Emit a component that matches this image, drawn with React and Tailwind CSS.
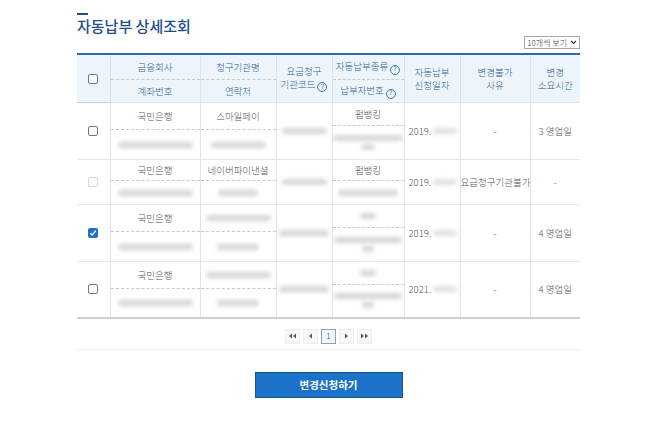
import React from "react";

const font = { fontFamily: '"Noto Sans CJK KR", "Noto Sans", sans-serif' };

function Q() {
  return (
    <span className="ml-[2px] inline-flex h-[10px] w-[10px] items-center justify-center rounded-full border border-[#3b78b8] align-[-1px]">
      <span className="text-[7px] font-normal leading-none text-[#3b78b8]" style={{ fontFamily: '"DejaVu Sans", sans-serif' }}>?</span>
    </span>
  );
}

function Blur({ w, h = 6, c = "#d6d6d6" }) {
  return <div className="rounded-[3px] blur-[2px]" style={{ width: w, height: h, background: c }} />;
}

function Box({ state }) {
  if (state === "checked")
    return (
      <div className="mx-auto flex h-[10px] w-[10px] items-center justify-center rounded-[2px] bg-[#1f6fd1]">
        <svg width="8" height="8" viewBox="0 0 8 8">
          <path d="M1.3 4.2 L3.2 6 L6.8 1.8" stroke="white" strokeWidth="1.4" fill="none" />
        </svg>
      </div>
    );
  return (
    <div
      className={
        state === "disabled"
          ? "mx-auto h-[10px] w-[10px] rounded-[2px] border border-[#d8d8d8] bg-[#fafafa]"
          : "mx-auto h-[10px] w-[10px] rounded-[2px] border border-[#777] bg-white"
      }
    />
  );
}

const vb = "border-l border-[#dde5ec]";

function Split({ top, bottom, h1, h2 }) {
  return (
    <div className="flex h-full flex-col">
      <div className="flex items-center justify-center" style={{ height: h1 }}>
        {top}
      </div>
      <div
        className="flex flex-1 flex-col items-center justify-center gap-[3px] border-t border-dashed border-[#c9c9c9]"
        style={{ minHeight: h2 }}
      >
        {bottom}
      </div>
    </div>
  );
}

function Tri({ dir, double }) {
  const one = (x) =>
    dir === "l" ? `M${x + 3} 0.5 L${x} 3 L${x + 3} 5.5 Z` : `M${x} 0.5 L${x + 3} 3 L${x} 5.5 Z`;
  return (
    <svg width={double ? 8 : 4} height="6" viewBox={`0 0 ${double ? 8 : 4} 6`}>
      <path d={one(0)} fill="#555" />
      {double && <path d={one(4)} fill="#555" />}
    </svg>
  );
}

const rows = [
  { h: 57, box: "normal", c2: "국민은행", c3: <span>스마일페이</span>, c5top: <span>펌뱅킹</span>, c5b: [70, 14], date: "2019.", reason: "-", time: "3 영업일", b2: 75, b3: 55, b4: 45 },
  { h: 45, box: "disabled", c2: "국민은행", c3: <span>네이버파이낸셜</span>, c5top: <span>펌뱅킹</span>, c5b: [60], date: "2019.", reason: "요금청구기관불가", time: "-", b2: 75, b3: 40, b4: 45 },
  { h: 57, box: "checked", c2: "국민은행", c3: <Blur w={65} />, c5top: <Blur w={16} />, c5b: [68, 12], date: "2019.", reason: "-", time: "4 영업일", b2: 75, b3: 42, b4: 50 },
  { h: 56, box: "normal", c2: "국민은행", c3: <Blur w={65} />, c5top: <Blur w={16} />, c5b: [68, 12], date: "2021.", reason: "-", time: "4 영업일", b2: 75, b3: 42, b4: 50 },
];

export default function App() {
  return (
    <div className="min-h-[421px] w-[658px] bg-white font-light" style={font}>
      <div className="ml-[77px] w-[503px] pt-[13px]">
        <div className="h-[2px] w-[11px] bg-[#1d4f8c]" />
        <div className="mt-[1px] text-[15px] font-medium leading-[20px] text-[#1d4f8c]">자동납부 상세조회</div>
        <div className="flex justify-end">
          <div className="flex h-[13px] items-center gap-[3px] border border-[#a8a8a8] px-[2px] text-[8px] leading-none text-[#333]">
            <span>10개씩 보기</span>
            <svg width="7" height="5" viewBox="0 0 7 5">
              <path d="M1 1 L3.5 3.5 L6 1" stroke="#333" strokeWidth="1.2" fill="none" />
            </svg>
          </div>
        </div>
        <table className="mt-[4px] w-[503px] table-fixed border-collapse text-[9.5px] text-[#555]">
          <colgroup>
            <col style={{ width: 33 }} />
            <col style={{ width: 90 }} />
            <col style={{ width: 76 }} />
            <col style={{ width: 56 }} />
            <col style={{ width: 72 }} />
            <col style={{ width: 56 }} />
            <col style={{ width: 70 }} />
            <col style={{ width: 50 }} />
          </colgroup>
          <thead>
            <tr className="h-[48px] border-t-2 border-[#2b6cb0] bg-[#eef5fa] text-[#2a5f98]">
              <td className="border-b border-[#c9d3dc] p-0">
                <Box state="normal" />
              </td>
              <td className={`${vb} border-b border-[#c9d3dc] p-0`}>
                <Split h1={24} h2={23} top={<span>금융회사</span>} bottom={<span>계좌번호</span>} />
              </td>
              <td className={`${vb} border-b border-[#c9d3dc] p-0`}>
                <Split h1={24} h2={23} top={<span>청구기관명</span>} bottom={<span>연락처</span>} />
              </td>
              <td className={`${vb} border-b border-[#c9d3dc] p-0 text-center leading-[13px]`}>
                요금청구
                <br />
                기관코드
                <Q />
              </td>
              <td className={`${vb} border-b border-[#c9d3dc] p-0`}>
                <Split
                  h1={24}
                  h2={23}
                  top={<span>자동납부종류<Q /></span>}
                  bottom={<span>납부자번호<Q /></span>}
                />
              </td>
              <td className={`${vb} border-b border-[#c9d3dc] p-0 text-center leading-[13px]`}>
                자동납부
                <br />
                신청일자
              </td>
              <td className={`${vb} border-b border-[#c9d3dc] p-0 text-center leading-[13px]`}>
                변경불가
                <br />
                사유
              </td>
              <td className={`${vb} border-b border-[#c9d3dc] p-0 text-center leading-[13px]`}>
                변경
                <br />
                소요시간
              </td>
            </tr>
          </thead>
          <tbody>
            {rows.map((r, i) => (
              <tr
                key={i}
                className={i === rows.length - 1 ? "border-b-2 border-[#cfcfcf]" : "border-b border-[#e6e6e6]"}
                style={{ height: r.h }}
              >
                <td className="p-0">
                  <Box state={r.box} />
                </td>
                <td className={`${vb} p-0`} style={{ height: r.h }}>
                  <Split h1={i === 1 ? 20 : 26} h2={20} top={<span>{r.c2}</span>} bottom={<Blur w={r.b2} />} />
                </td>
                <td className={`${vb} p-0`} style={{ height: r.h }}>
                  <Split h1={i === 1 ? 20 : 26} h2={20} top={r.c3} bottom={<Blur w={r.b3} />} />
                </td>
                <td className={`${vb} p-0`}>
                  <div className="flex justify-center">
                    <Blur w={r.b4} />
                  </div>
                </td>
                <td className={`${vb} p-0`} style={{ height: r.h }}>
                  <Split
                    h1={i === 1 ? 20 : 22}
                    h2={20}
                    top={r.c5top}
                    bottom={r.c5b.map((w, k) => (
                      <Blur key={k} w={w} />
                    ))}
                  />
                </td>
                <td className={`${vb} p-0 pl-[4px]`}>
                  <div className="flex items-center gap-[2px]">
                    <span>{r.date}</span>
                    <Blur w={24} c="#e0e0e0" />
                  </div>
                </td>
                <td className={`${vb} whitespace-nowrap p-0 text-center`}>{r.reason}</td>
                <td className={`${vb} p-0 text-center`}>{r.time}</td>
              </tr>
            ))}
          </tbody>
        </table>
        <div className="flex h-[31px] items-center justify-center gap-[3px] border-b border-[#efefef] pt-[9px] pb-[4px]">
          {[
            <Tri dir="l" double />,
            <Tri dir="l" />,
            "1",
            <Tri dir="r" />,
            <Tri dir="r" double />,
          ].map((t, i) => (
            <div
              key={i}
              className={
                i === 2
                  ? "flex h-[15px] w-[15px] items-center justify-center border border-[#8aa4bd] bg-[#f3f7fb] text-[8px] text-[#345]"
                  : "flex h-[15px] w-[15px] items-center justify-center border border-[#eeeeee] bg-[#f7f7f7]"
              }
            >
              {t}
            </div>
          ))}
        </div>
        <div className="mt-[22px] flex justify-center">
          <div className="flex h-[26px] w-[148px] items-center justify-center border border-[#1d4f8c] bg-[#1a73c9] text-[10.5px] font-bold text-white">
            변경신청하기
          </div>
        </div>
      </div>
    </div>
  );
}
